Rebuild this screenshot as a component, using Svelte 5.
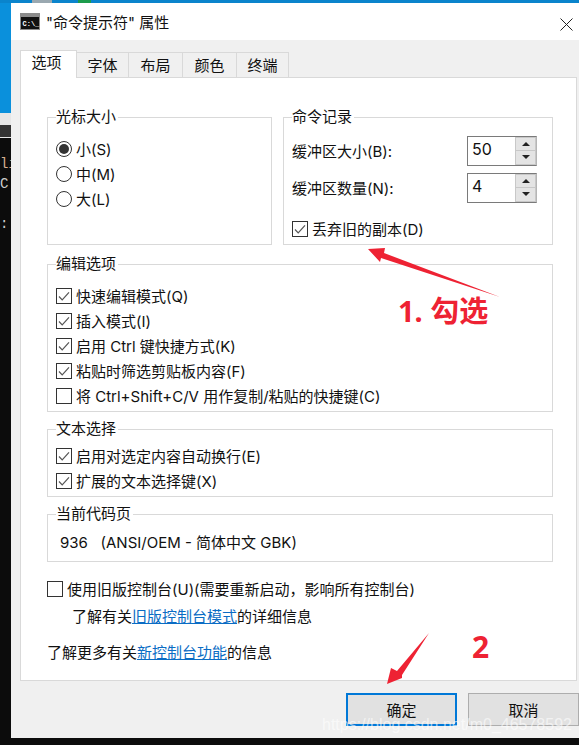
<script>
  const cursorSizes = [
    { label: '小(S)', checked: true },
    { label: '中(M)', checked: false },
    { label: '大(L)', checked: false }
  ];
  const editOptions = [
    { label: '快速编辑模式(Q)', checked: true },
    { label: '插入模式(I)', checked: true },
    { label: '启用 Ctrl 键快捷方式(K)', checked: true },
    { label: '粘贴时筛选剪贴板内容(F)', checked: true },
    { label: '将 Ctrl+Shift+C/V 用作复制/粘贴的快捷键(C)', checked: false }
  ];
  const textOptions = [
    { label: '启用对选定内容自动换行(E)', checked: true },
    { label: '扩展的文本选择键(X)', checked: true }
  ];
  const tabs = ['选项', '字体', '布局', '颜色', '终端'];
  const spinners = [
    { label: '缓冲区大小(B):', value: '50' },
    { label: '缓冲区数量(N):', value: '4' }
  ];
</script>

{#snippet check(item)}
  <div class="opt">
    <span class="box">
      {#if item.checked}
        <svg width="14" height="14" viewBox="0 0 14 14"><path d="M2 7.5 L5.2 10.8 L12 3.4" fill="none" stroke="#555" stroke-width="1.2" /></svg>
      {/if}
    </span>
    <span>{item.label}</span>
  </div>
{/snippet}

{#snippet cmdIcon()}
  <svg width="20" height="17" viewBox="0 0 20 17">
    <rect width="20" height="17" fill="#8c8c8c" />
    <rect x="1" y="4" width="18" height="12" fill="#111" />
    <text x="2.5" y="12.5" class="icontext">C:\_</text>
  </svg>
{/snippet}

<div class="screen">
  <div class="backdrop">
    <div class="bd-top">
      <span class="bd-grey"></span>
      <span class="bd-green"></span>
    </div>
    <div class="bd-left">
      <div class="bd-blue"></div>
      <div class="bd-strip"><span class="bd-icon"></span></div>
      <div class="bd-console">
        <span class="c1">li</span>
        <span class="c3">C</span>
        <span class="c2">:</span>
      </div>
    </div>
  </div>

  <div class="window">
    <div class="titlebar">
      {@render cmdIcon()}
      <span class="title">"命令提示符" 属性</span>
      <svg class="close" width="13" height="13" viewBox="0 0 13 13"><path d="M0.5 0.5 L12.5 12.5 M12.5 0.5 L0.5 12.5" stroke="#222" stroke-width="1" /></svg>
    </div>

    <div class="body">
      <div class="tabs">
        {#each tabs as t, i}
          <div class="tab" class:active={i === 0}>{t}</div>
        {/each}
      </div>

      <div class="panel">
        <div class="row-two">
          <fieldset class="cursor">
            <legend>光标大小</legend>
            <div class="list">
              {#each cursorSizes as r}
                <div class="opt">
                  <span class="radio" class:on={r.checked}></span>
                  <span>{r.label}</span>
                </div>
              {/each}
            </div>
          </fieldset>
          <fieldset class="history">
            <legend>命令记录</legend>
            {#each spinners as s}
              <div class="spin-row">
                <span>{s.label}</span>
                <div class="spin">
                  <span class="spin-val">{s.value}</span>
                  <div class="spin-btns">
                    <span class="up"></span>
                    <span class="down"></span>
                  </div>
                </div>
              </div>
            {/each}
            <div class="discard">
              {@render check({ label: '丢弃旧的副本(D)', checked: true })}
            </div>
          </fieldset>
        </div>

        <fieldset class="edit">
          <legend>编辑选项</legend>
          <div class="list">
            {#each editOptions as o}
              {@render check(o)}
            {/each}
          </div>
        </fieldset>

        <fieldset class="textsel">
          <legend>文本选择</legend>
          <div class="list">
            {#each textOptions as o}
              {@render check(o)}
            {/each}
          </div>
        </fieldset>

        <fieldset class="codepage">
          <legend>当前代码页</legend>
          <div class="cp">936&nbsp;&nbsp; (ANSI/OEM - 简体中文 GBK)</div>
        </fieldset>

        <div class="legacy">
          {@render check({ label: '使用旧版控制台(U)(需要重新启动，影响所有控制台)', checked: false })}
        </div>
        <div class="learn1">了解有关<span class="link">旧版控制台模式</span>的详细信息</div>
        <div class="learn2">了解更多有关<span class="link">新控制台功能</span>的信息</div>
      </div>

      <div class="buttons">
        <button class="primary">确定</button>
        <button>取消</button>
      </div>
    </div>
  </div>

  <!-- screenshot annotations -->
  <svg class="marks" width="579" height="745" viewBox="0 0 579 745">
    <path d="M368 249 L385 248 L384 253 L500 297 L381 258 L380 262 Z" fill="#ee2233" />
    <path d="M387 684 L391 668 L397 671 L429 633 L402 675 L402 678 Z" fill="#ee2233" />
  </svg>
  <div class="note n1">1. 勾选</div>
  <div class="note n2">2</div>
  <div class="watermark">https://blog.csdn.net/m0_46578592</div>
</div>

<style>
  :global(body) {
    margin: 0;
  }
  .screen {
    position: relative;
    width: 579px;
    height: 745px;
    overflow: hidden;
    background: #0c0c0c;
    font-family: Inter, "Noto Sans CJK SC", sans-serif;
    font-size: 15px;
    color: #111;
  }
  .backdrop {
    position: absolute;
    inset: 0;
    display: flex;
    flex-direction: column;
  }
  .bd-top {
    height: 3px;
    flex: none;
    background: #0a84cc;
    display: flex;
  }
  .bd-grey {
    width: 20px;
    margin-left: 32px;
    background: #9aa8b0;
  }
  .bd-green {
    width: 13px;
    margin-left: 26px;
    background: #1c9c4c;
  }
  .bd-left {
    width: 11px;
    flex: 1;
    display: flex;
    flex-direction: column;
  }
  .bd-blue {
    height: 110px;
    background: #0a90dc;
  }
  .bd-strip {
    height: 25px;
    background: #e6e6e6;
    display: flex;
    align-items: flex-end;
    box-sizing: border-box;
    padding-bottom: 1px;
  }
  .bd-icon {
    width: 11px;
    height: 12px;
    background: #333;
  }
  .bd-console {
    flex: 1;
    display: flex;
    flex-direction: column;
    padding-top: 18px;
    font-family: "Liberation Mono", monospace;
    font-size: 14px;
    line-height: 16px;
    color: #ccc;
    background: #0c0c0c;
  }
  .c1 {
    color: #d8b090;
  }
  .c3 {
    margin-top: 4px;
  }
  .c2 {
    margin-top: 24px;
  }
  .window {
    position: absolute;
    left: 11px;
    top: 3px;
    width: 568px;
    height: 735px;
    display: flex;
    flex-direction: column;
    background: #f0f0f0;
  }
  .titlebar {
    height: 37px;
    flex: none;
    background: #fff;
    display: flex;
    align-items: center;
    padding-left: 9px;
    gap: 6px;
    font-size: 15px;
    position: relative;
  }
  .icontext {
    font-family: "Liberation Mono", monospace;
    font-size: 7px;
    font-weight: 700;
    fill: #fff;
  }
  .close {
    position: absolute;
    right: 6px;
    top: 15px;
  }
  .body {
    flex: 1;
    padding: 10px 2px 0 9px;
    display: flex;
    flex-direction: column;
  }
  .tabs {
    display: flex;
    height: 28px;
    align-items: flex-end;
    position: relative;
    z-index: 1;
  }
  .tab {
    width: 54px;
    height: 25px;
    box-sizing: border-box;
    background: #f0f0f0;
    border: 1px solid #d9d9d9;
    border-left: none;
    border-bottom: none;
    text-align: center;
    line-height: 26px;
    margin-bottom: 1px;
  }
  .tab:nth-child(2),
  .tab:nth-child(5) {
    width: 52px;
  }
  .tab.active {
    width: 57px;
    height: 28px;
    background: #fff;
    border-left: 1px solid #d9d9d9;
    line-height: 24px;
    padding-right: 4px;
    margin-bottom: 0;
  }
  .panel {
    height: 604px;
    box-sizing: border-box;
    background: #fff;
    border: 1px solid #d9d9d9;
    margin-top: -1px;
    padding: 30px 23px 0 26px;
  }
  .row-two {
    display: flex;
    gap: 11px;
  }
  fieldset {
    margin: 0;
    padding: 0 9px 0 8px;
    border: 1px solid #d9d9d9;
    box-sizing: border-box;
    min-width: 0;
  }
  legend {
    padding: 0 2px 0 0;
    line-height: 18px;
  }
  .cursor {
    width: 225px;
    height: 137px;
  }
  .history {
    width: 270px;
    height: 137px;
  }
  .list {
    display: flex;
    flex-direction: column;
  }
  .cursor .list {
    padding-top: 10px;
  }
  .opt {
    display: flex;
    align-items: center;
    gap: 4px;
    height: 25px;
    white-space: nowrap;
  }
  .radio {
    width: 16px;
    height: 16px;
    box-sizing: border-box;
    border: 1px solid #333;
    border-radius: 50%;
    display: flex;
    align-items: center;
    justify-content: center;
  }
  .radio.on::after {
    content: "";
    width: 10px;
    height: 10px;
    border-radius: 50%;
    background: #333;
  }
  .box {
    width: 16px;
    height: 16px;
    flex: none;
    box-sizing: border-box;
    border: 1px solid #333;
    display: flex;
    align-items: center;
    justify-content: center;
    background: #fff;
  }
  .spin-row {
    display: flex;
    justify-content: space-between;
    align-items: center;
    height: 37px;
    padding-right: 6px;
  }
  .history legend + .spin-row {
    margin-top: 6px;
  }
  .spin {
    width: 70px;
    height: 30px;
    box-sizing: border-box;
    border: 1px solid #7a7a7a;
    border-right: 1px solid #b5b5b5;
    display: flex;
    background: #fff;
  }
  .spin-val {
    flex: 1;
    padding-left: 4px;
    font-size: 16px;
    line-height: 25px;
  }
  .spin-btns {
    width: 21px;
    display: flex;
    flex-direction: column;
    gap: 1px;
    padding: 1px;
    background: #c8c8c8;
    box-sizing: border-box;
  }
  .spin-btns span {
    flex: 1;
    background: #e4e4e4;
    display: flex;
    align-items: center;
    justify-content: center;
  }
  .up::after {
    content: "";
    border: 4px solid transparent;
    border-top: none;
    border-bottom: 4px solid #222;
  }
  .down::after {
    content: "";
    border: 4px solid transparent;
    border-bottom: none;
    border-top: 4px solid #222;
  }
  .discard {
    margin-top: 10px;
  }
  .edit {
    margin-top: 10px;
    height: 157px;
  }
  .edit .list {
    padding-top: 10px;
  }
  .textsel {
    margin-top: 8px;
    height: 77px;
  }
  .textsel .list {
    padding-top: 5px;
  }
  .codepage {
    margin-top: 8px;
    height: 57px;
  }
  .cp {
    padding-left: 4px;
    line-height: 18px;
    padding-top: 11px;
    white-space: nowrap;
  }
  .legacy {
    margin-top: 14px;
  }
  .learn1 {
    margin: 4px 0 0 25px;
    white-space: nowrap;
  }
  .learn2 {
    margin-top: 15px;
    white-space: nowrap;
  }
  .link {
    color: #0a6cc4;
    text-decoration: underline;
  }
  .buttons {
    display: flex;
    justify-content: flex-end;
    gap: 11px;
    padding-top: 12px;
    margin-right: -2px;
  }
  button {
    width: 111px;
    height: 33px;
    box-sizing: border-box;
    padding: 0;
    background: #e1e1e1;
    border: 1px solid #adadad;
    font: inherit;
    color: #111;
  }
  .primary {
    border: 2px solid #0078d7;
  }
  .marks {
    position: absolute;
    left: 0;
    top: 0;
  }
  .note {
    position: absolute;
    color: #ee2233;
    font-weight: 700;
    font-family: "Noto Sans", "Noto Sans CJK SC", sans-serif;
    line-height: 1;
  }
  .n1 {
    left: 398px;
    top: 296px;
    font-size: 29px;
  }
  .n2 {
    left: 472px;
    top: 632px;
    font-size: 30px;
  }
  .watermark {
    position: absolute;
    left: 322px;
    top: 716px;
    font-family: "Liberation Sans", sans-serif;
    font-size: 16px;
    color: rgba(255, 255, 255, 0.6);
    white-space: nowrap;
  }
</style>
